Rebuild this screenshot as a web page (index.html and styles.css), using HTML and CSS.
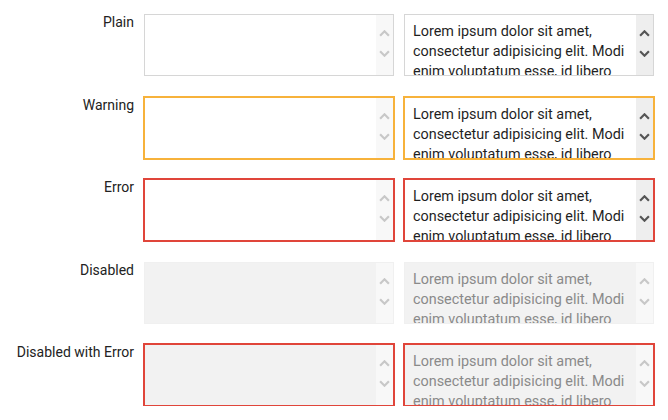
FILE: index.html
```html
<!DOCTYPE html>
<html>
<head>
<meta charset="utf-8">
<link rel="stylesheet" href="styles.css">
</head>
<body>
<div class="form">
  <div class="label">Plain</div>
  <div class="field">
    <textarea class="text"></textarea>
    <div class="sb sb-off"><svg class="chev" viewBox="0 0 10 6"><path d="M1 5L5 1L9 5"/></svg><svg class="chev" viewBox="0 0 10 6"><path d="M1 1L5 5L9 1"/></svg></div>
  </div>
  <div class="field">
    <textarea class="text">Lorem ipsum dolor sit amet, consectetur adipisicing elit. Modi enim voluptatum esse, id libero</textarea>
    <div class="sb sb-on"><svg class="chev" viewBox="0 0 10 6"><path d="M1 5L5 1L9 5"/></svg><svg class="chev" viewBox="0 0 10 6"><path d="M1 1L5 5L9 1"/></svg></div>
  </div>

  <div class="label">Warning</div>
  <div class="field warning">
    <textarea class="text"></textarea>
    <div class="sb sb-off"><svg class="chev" viewBox="0 0 10 6"><path d="M1 5L5 1L9 5"/></svg><svg class="chev" viewBox="0 0 10 6"><path d="M1 1L5 5L9 1"/></svg></div>
  </div>
  <div class="field warning">
    <textarea class="text">Lorem ipsum dolor sit amet, consectetur adipisicing elit. Modi enim voluptatum esse, id libero</textarea>
    <div class="sb sb-on"><svg class="chev" viewBox="0 0 10 6"><path d="M1 5L5 1L9 5"/></svg><svg class="chev" viewBox="0 0 10 6"><path d="M1 1L5 5L9 1"/></svg></div>
  </div>

  <div class="label">Error</div>
  <div class="field error">
    <textarea class="text"></textarea>
    <div class="sb sb-off"><svg class="chev" viewBox="0 0 10 6"><path d="M1 5L5 1L9 5"/></svg><svg class="chev" viewBox="0 0 10 6"><path d="M1 1L5 5L9 1"/></svg></div>
  </div>
  <div class="field error">
    <textarea class="text">Lorem ipsum dolor sit amet, consectetur adipisicing elit. Modi enim voluptatum esse, id libero</textarea>
    <div class="sb sb-on"><svg class="chev" viewBox="0 0 10 6"><path d="M1 5L5 1L9 5"/></svg><svg class="chev" viewBox="0 0 10 6"><path d="M1 1L5 5L9 1"/></svg></div>
  </div>

  <div class="label">Disabled</div>
  <div class="field disabled">
    <textarea class="text" disabled></textarea>
    <div class="sb sb-off"><svg class="chev" viewBox="0 0 10 6"><path d="M1 5L5 1L9 5"/></svg><svg class="chev" viewBox="0 0 10 6"><path d="M1 1L5 5L9 1"/></svg></div>
  </div>
  <div class="field disabled">
    <textarea class="text" disabled>Lorem ipsum dolor sit amet, consectetur adipisicing elit. Modi enim voluptatum esse, id libero</textarea>
    <div class="sb sb-off"><svg class="chev" viewBox="0 0 10 6"><path d="M1 5L5 1L9 5"/></svg><svg class="chev" viewBox="0 0 10 6"><path d="M1 1L5 5L9 1"/></svg></div>
  </div>

  <div class="label">Disabled with Error</div>
  <div class="field disabled error">
    <textarea class="text" disabled></textarea>
    <div class="sb sb-off"><svg class="chev" viewBox="0 0 10 6"><path d="M1 5L5 1L9 5"/></svg><svg class="chev" viewBox="0 0 10 6"><path d="M1 1L5 5L9 1"/></svg></div>
  </div>
  <div class="field disabled error">
    <textarea class="text" disabled>Lorem ipsum dolor sit amet, consectetur adipisicing elit. Modi enim voluptatum esse, id libero</textarea>
    <div class="sb sb-off"><svg class="chev" viewBox="0 0 10 6"><path d="M1 5L5 1L9 5"/></svg><svg class="chev" viewBox="0 0 10 6"><path d="M1 1L5 5L9 1"/></svg></div>
  </div>
</div>
</body>
</html>
```

FILE: styles.css
```css
html, body {
  margin: 0;
  padding: 0;
  background: #fff;
}
body {
  font-family: Roboto, "Liberation Sans", sans-serif;
  font-size: 14px;
  color: #222;
}
.form {
  display: grid;
  grid-template-columns: 134px 250px 250px;
  grid-auto-rows: 62px;
  column-gap: 10px;
  row-gap: 20.5px;
  padding-top: 14px;
}
.label {
  text-align: right;
  line-height: 20px;
  margin-top: -2px;
  color: #222;
}
.field {
  box-sizing: border-box;
  display: flex;
  border: 1px solid #d6d6d6;
  background: #fff;
  overflow: hidden;
}
.text {
  flex: 1;
  min-width: 0;
  margin: 0;
  border: 0;
  outline: none;
  resize: none;
  overflow: hidden;
  background: transparent;
  font: inherit;
  font-size: 14.4px;
  line-height: 20px;
  color: #1f1f1f;
  padding: 7px 4px 0 8px;
}
.sb {
  width: 17px;
  flex: none;
  display: flex;
  flex-direction: column;
  align-items: center;
  justify-content: center;
  gap: 13px;
  padding-bottom: 3px;
  box-sizing: border-box;
}
.sb-on { background: #eeeeee; }
.sb-off { background: #f8f8f8; }
.chev {
  width: 11px;
  height: 7px;
  fill: none;
  stroke-width: 2;
}
.sb-on .chev { stroke: #555; }
.sb-off .chev { stroke: #c8c8c8; }
.warning {
  border-color: #f7b23b;
  box-shadow: 0 0 0 1px #f7b23b;
}
.error {
  border-color: #e0453a;
  box-shadow: 0 0 0 1px #e0453a;
}
.disabled {
  background: #f2f2f2;
  border-color: #f0f0f0;
}
.disabled.error {
  border-color: #e0453a;
}
.disabled .text {
  color: #8a8a8a;
  -webkit-text-fill-color: #8a8a8a;
}
```
